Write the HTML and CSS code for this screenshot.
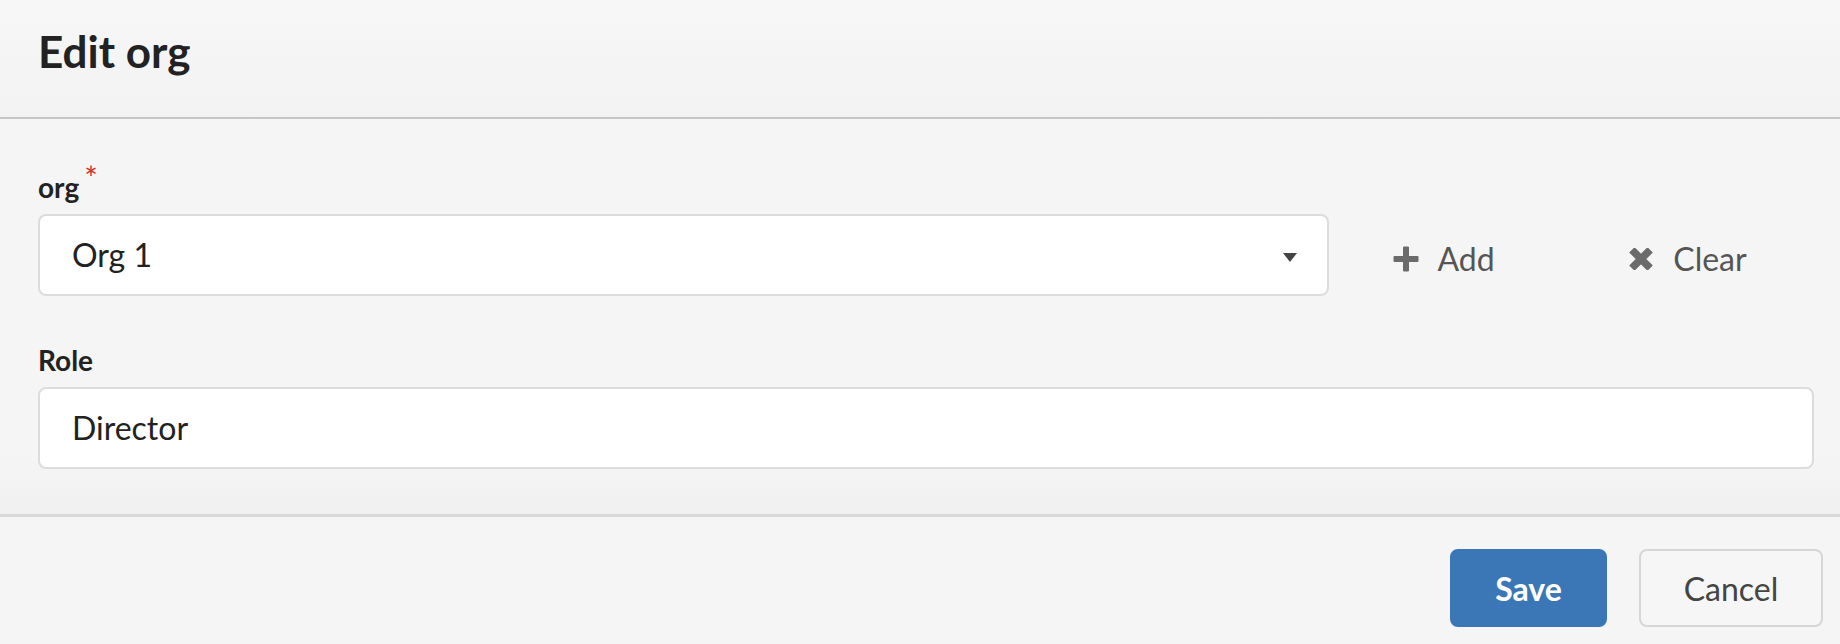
FILE: index.html
```html
<!DOCTYPE html>
<html lang="en">
<head>
<meta charset="utf-8">
<title>Edit org</title>
<link rel="stylesheet" href="styles.css">
</head>
<body>
<div class="modal">
  <header class="modal-header">
    <h4 class="modal-title">Edit org</h4>
  </header>
  <div class="modal-body">
    <div class="field">
      <label class="field-label">org<span class="required">*</span></label>
      <div class="select-row">
        <div class="select">
          <span class="select-value">Org 1</span>
          <span class="caret"></span>
        </div>
        <button class="link-btn" type="button">
          <svg class="icon" width="26" height="26" viewBox="0 0 26 26"><path d="M10 1.5a1 1 0 0 1 1-1h4a1 1 0 0 1 1 1V10h8.5a1 1 0 0 1 1 1v4a1 1 0 0 1-1 1H16v8.5a1 1 0 0 1-1 1h-4a1 1 0 0 1-1-1V16H1.5a1 1 0 0 1-1-1v-4a1 1 0 0 1 1-1H10z" fill="#6b6b6b"/></svg>
          <span>Add</span>
        </button>
        <button class="link-btn" type="button">
          <svg class="icon" width="24" height="22" viewBox="0 0 24 22"><path d="M5.5 4.5 18.5 17.5M18.5 4.5 5.5 17.5" stroke="#6b6b6b" stroke-width="7.5" stroke-linecap="square" fill="none"/></svg>
          <span>Clear</span>
        </button>
      </div>
    </div>
    <div class="field">
      <label class="field-label">Role</label>
      <div class="input">Director</div>
    </div>
  </div>
  <footer class="modal-footer">
    <button class="btn btn-primary" type="button">Save</button>
    <button class="btn btn-default" type="button">Cancel</button>
  </footer>
</div>
</body>
</html>
```
FILE: styles.css
```css
* { box-sizing: border-box; }
html, body {
  margin: 0;
  padding: 0;
  background: #f5f5f5;
  font-family: Lato, "Open Sans", "Liberation Sans", sans-serif;
  color: #222;
}
.modal {
  width: 1840px;
  height: 644px;
  display: flex;
  flex-direction: column;
}
.modal-header {
  height: 119px;
  padding: 25px 38px 0;
  background: linear-gradient(#f7f7f7, #f2f2f2);
  border-bottom: 2px solid #c6c6c6;
}
.modal-title {
  margin: 0;
  font-size: 44px;
  font-weight: 700;
  line-height: 53px;
  color: #222;
}
.modal-body {
  padding: 51px 26px 45px 38px;
  display: flex;
  flex-direction: column;
  gap: 47px;
  background: linear-gradient(#f5f5f5 85%, #f0f0f0);
}
.field {
  display: flex;
  flex-direction: column;
  gap: 10px;
}
.field-label {
  font-size: 28px;
  font-weight: 700;
  line-height: 34px;
  color: #222;
}
.required {
  position: relative;
  top: -7px;
  color: #d9302c;
  font-size: 32px;
  font-weight: 400;
  vertical-align: top;
  line-height: 30px;
  margin-left: 5px;
}
.select-row {
  display: flex;
  align-items: center;
}
.select, .input {
  height: 82px;
  background: #fff;
  border: 2px solid #dcdcdc;
  border-radius: 8px;
  font-size: 32px;
  line-height: 38px;
  padding: 20px 30px 0 32px;
  color: #222;
}
.select {
  width: 1291px;
  display: flex;
  justify-content: space-between;
  align-items: flex-start;
  padding-right: 30px;
}
.caret {
  width: 0;
  height: 0;
  margin-top: 17px;
  border-left: 7.5px solid transparent;
  border-right: 7.5px solid transparent;
  border-top: 9px solid #444;
}
.link-btn {
  width: 230px;
  height: 82px;
  background: none;
  border: 0;
  padding: 7px 0 0;
  display: flex;
  align-items: center;
  justify-content: center;
  gap: 18px;
  font-family: inherit;
  font-size: 32px;
  color: #555;
}
.link-btn + .link-btn { margin-left: 14px; gap: 20px; }
.icon { display: block; }
.modal-footer {
  flex: 1;
  border-top: 3px solid #d9d9d9;
  padding: 32px 17px 0 0;
  display: flex;
  justify-content: flex-end;
  align-items: flex-start;
  gap: 32px;
}
.btn {
  height: 78px;
  border-radius: 8px;
  font-family: inherit;
  font-size: 32px;
  padding: 0;
}
.btn-primary {
  width: 157px;
  background: #3b76b6;
  border: 2px solid #3b76b6;
  color: #fff;
  font-weight: 700;
}
.btn-default {
  width: 184px;
  background: #f6f6f6;
  border: 2px solid #d6d6d6;
  color: #444;
}
```
